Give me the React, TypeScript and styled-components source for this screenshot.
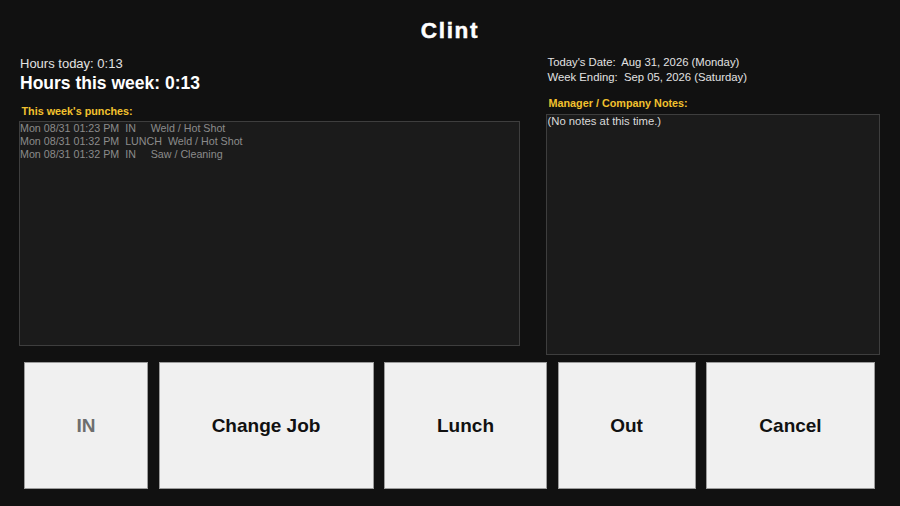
import React from "react";
import styled, { createGlobalStyle } from "styled-components";

const Global = createGlobalStyle`
  html, body { margin: 0; padding: 0; background: #111111; }
  body { font-family: "Liberation Sans", Arial, sans-serif; }
  * { box-sizing: border-box; }
`;

const Page = styled.div`
  width: 900px;
  height: 506px;
  background: #111111;
  padding-top: 18px;
  overflow: hidden;
`;

const Title = styled.h1`
  margin: 0;
  text-align: center;
  font-size: 22.5px;
  line-height: 26px;
  font-weight: bold;
  letter-spacing: 1.7px;
  color: #ffffff;
  -webkit-text-stroke: 0.5px #ffffff;
`;

const Main = styled.div`
  display: grid;
  grid-template-columns: 501px 334px;
  column-gap: 26px;
  padding-left: 19px;
  margin-top: 11px;
`;

const Column = styled.div`
  display: flex;
  flex-direction: column;
`;

const HoursToday = styled.div`
  font-size: 13px;
  line-height: 16px;
  color: #e2e2e2;
  padding-left: 1px;
  margin-top: 1px;
`;

const HoursWeek = styled.div`
  font-size: 17.5px;
  line-height: 21px;
  font-weight: bold;
  color: #ffffff;
  padding-left: 1px;
  margin-top: 1px;
`;

const SectionLabel = styled.div<{ $gap: number }>`
  font-size: 10.8px;
  line-height: 14px;
  font-weight: bold;
  color: #f2c12e;
  padding-left: 2.5px;
  margin-top: ${(p) => p.$gap}px;
`;

const InfoLine = styled.div`
  font-size: 11.3px;
  line-height: 15px;
  color: #e2e2e2;
  padding-left: 1.5px;
  white-space: pre;
`;

const ListBox = styled.div<{ $h: number; $gap: number }>`
  height: ${(p) => p.$h}px;
  margin-top: ${(p) => p.$gap}px;
  background: #1b1b1b;
  border: 1px solid #3e3e3e;
  overflow: hidden;
`;

const PunchLine = styled.div`
  font-size: 10.7px;
  line-height: 12.7px;
  color: #8b8b8b;
  white-space: pre;
`;

const NoteLine = styled.div`
  font-size: 11.3px;
  line-height: 13px;
  color: #dadada;
  padding-left: 0.5px;
`;

const ButtonRow = styled.div`
  display: flex;
  gap: 10.5px;
  padding-left: 24px;
  margin-top: 7px;
`;

const ActionButton = styled.button<{ $w: number; $disabled?: boolean }>`
  width: ${(p) => p.$w}px;
  height: 127px;
  background: #f0f0f0;
  border: 1px solid #9c9c9c;
  border-radius: 0;
  padding: 2px 0 0 0;
  margin: 0;
  font-family: "Liberation Sans", Arial, sans-serif;
  font-size: 19px;
  font-weight: bold;
  color: ${(p) => (p.$disabled ? "#6e6e6e" : "#111111")};
  display: flex;
  align-items: center;
  justify-content: center;
`;

const punches = [
  "Mon 08/31 01:23 PM  IN     Weld / Hot Shot",
  "Mon 08/31 01:32 PM  LUNCH  Weld / Hot Shot",
  "Mon 08/31 01:32 PM  IN     Saw / Cleaning",
];

const buttons: { label: string; w: number; disabled?: boolean }[] = [
  { label: "IN", w: 124, disabled: true },
  { label: "Change Job", w: 215 },
  { label: "Lunch", w: 163 },
  { label: "Out", w: 138 },
  { label: "Cancel", w: 169 },
];

export default function App() {
  return (
    <>
      <Global />
      <Page>
        <Title>Clint</Title>
        <Main>
          <Column>
            <HoursToday>Hours today: 0:13</HoursToday>
            <HoursWeek>Hours this week: 0:13</HoursWeek>
            <SectionLabel $gap={9.6}>This week's punches:</SectionLabel>
            <ListBox $h={225} $gap={3.7}>
              {punches.map((p) => (
                <PunchLine key={p}>{p}</PunchLine>
              ))}
            </ListBox>
          </Column>
          <Column>
            <InfoLine>Today's Date:  Aug 31, 2026 (Monday)</InfoLine>
            <InfoLine>Week Ending:  Sep 05, 2026 (Saturday)</InfoLine>
            <SectionLabel $gap={10.7}>Manager / Company Notes:</SectionLabel>
            <ListBox $h={241} $gap={4}>
              <NoteLine>(No notes at this time.)</NoteLine>
            </ListBox>
          </Column>
        </Main>
        <ButtonRow>
          {buttons.map((b) => (
            <ActionButton key={b.label} $w={b.w} $disabled={b.disabled}>
              {b.label}
            </ActionButton>
          ))}
        </ButtonRow>
      </Page>
    </>
  );
}
